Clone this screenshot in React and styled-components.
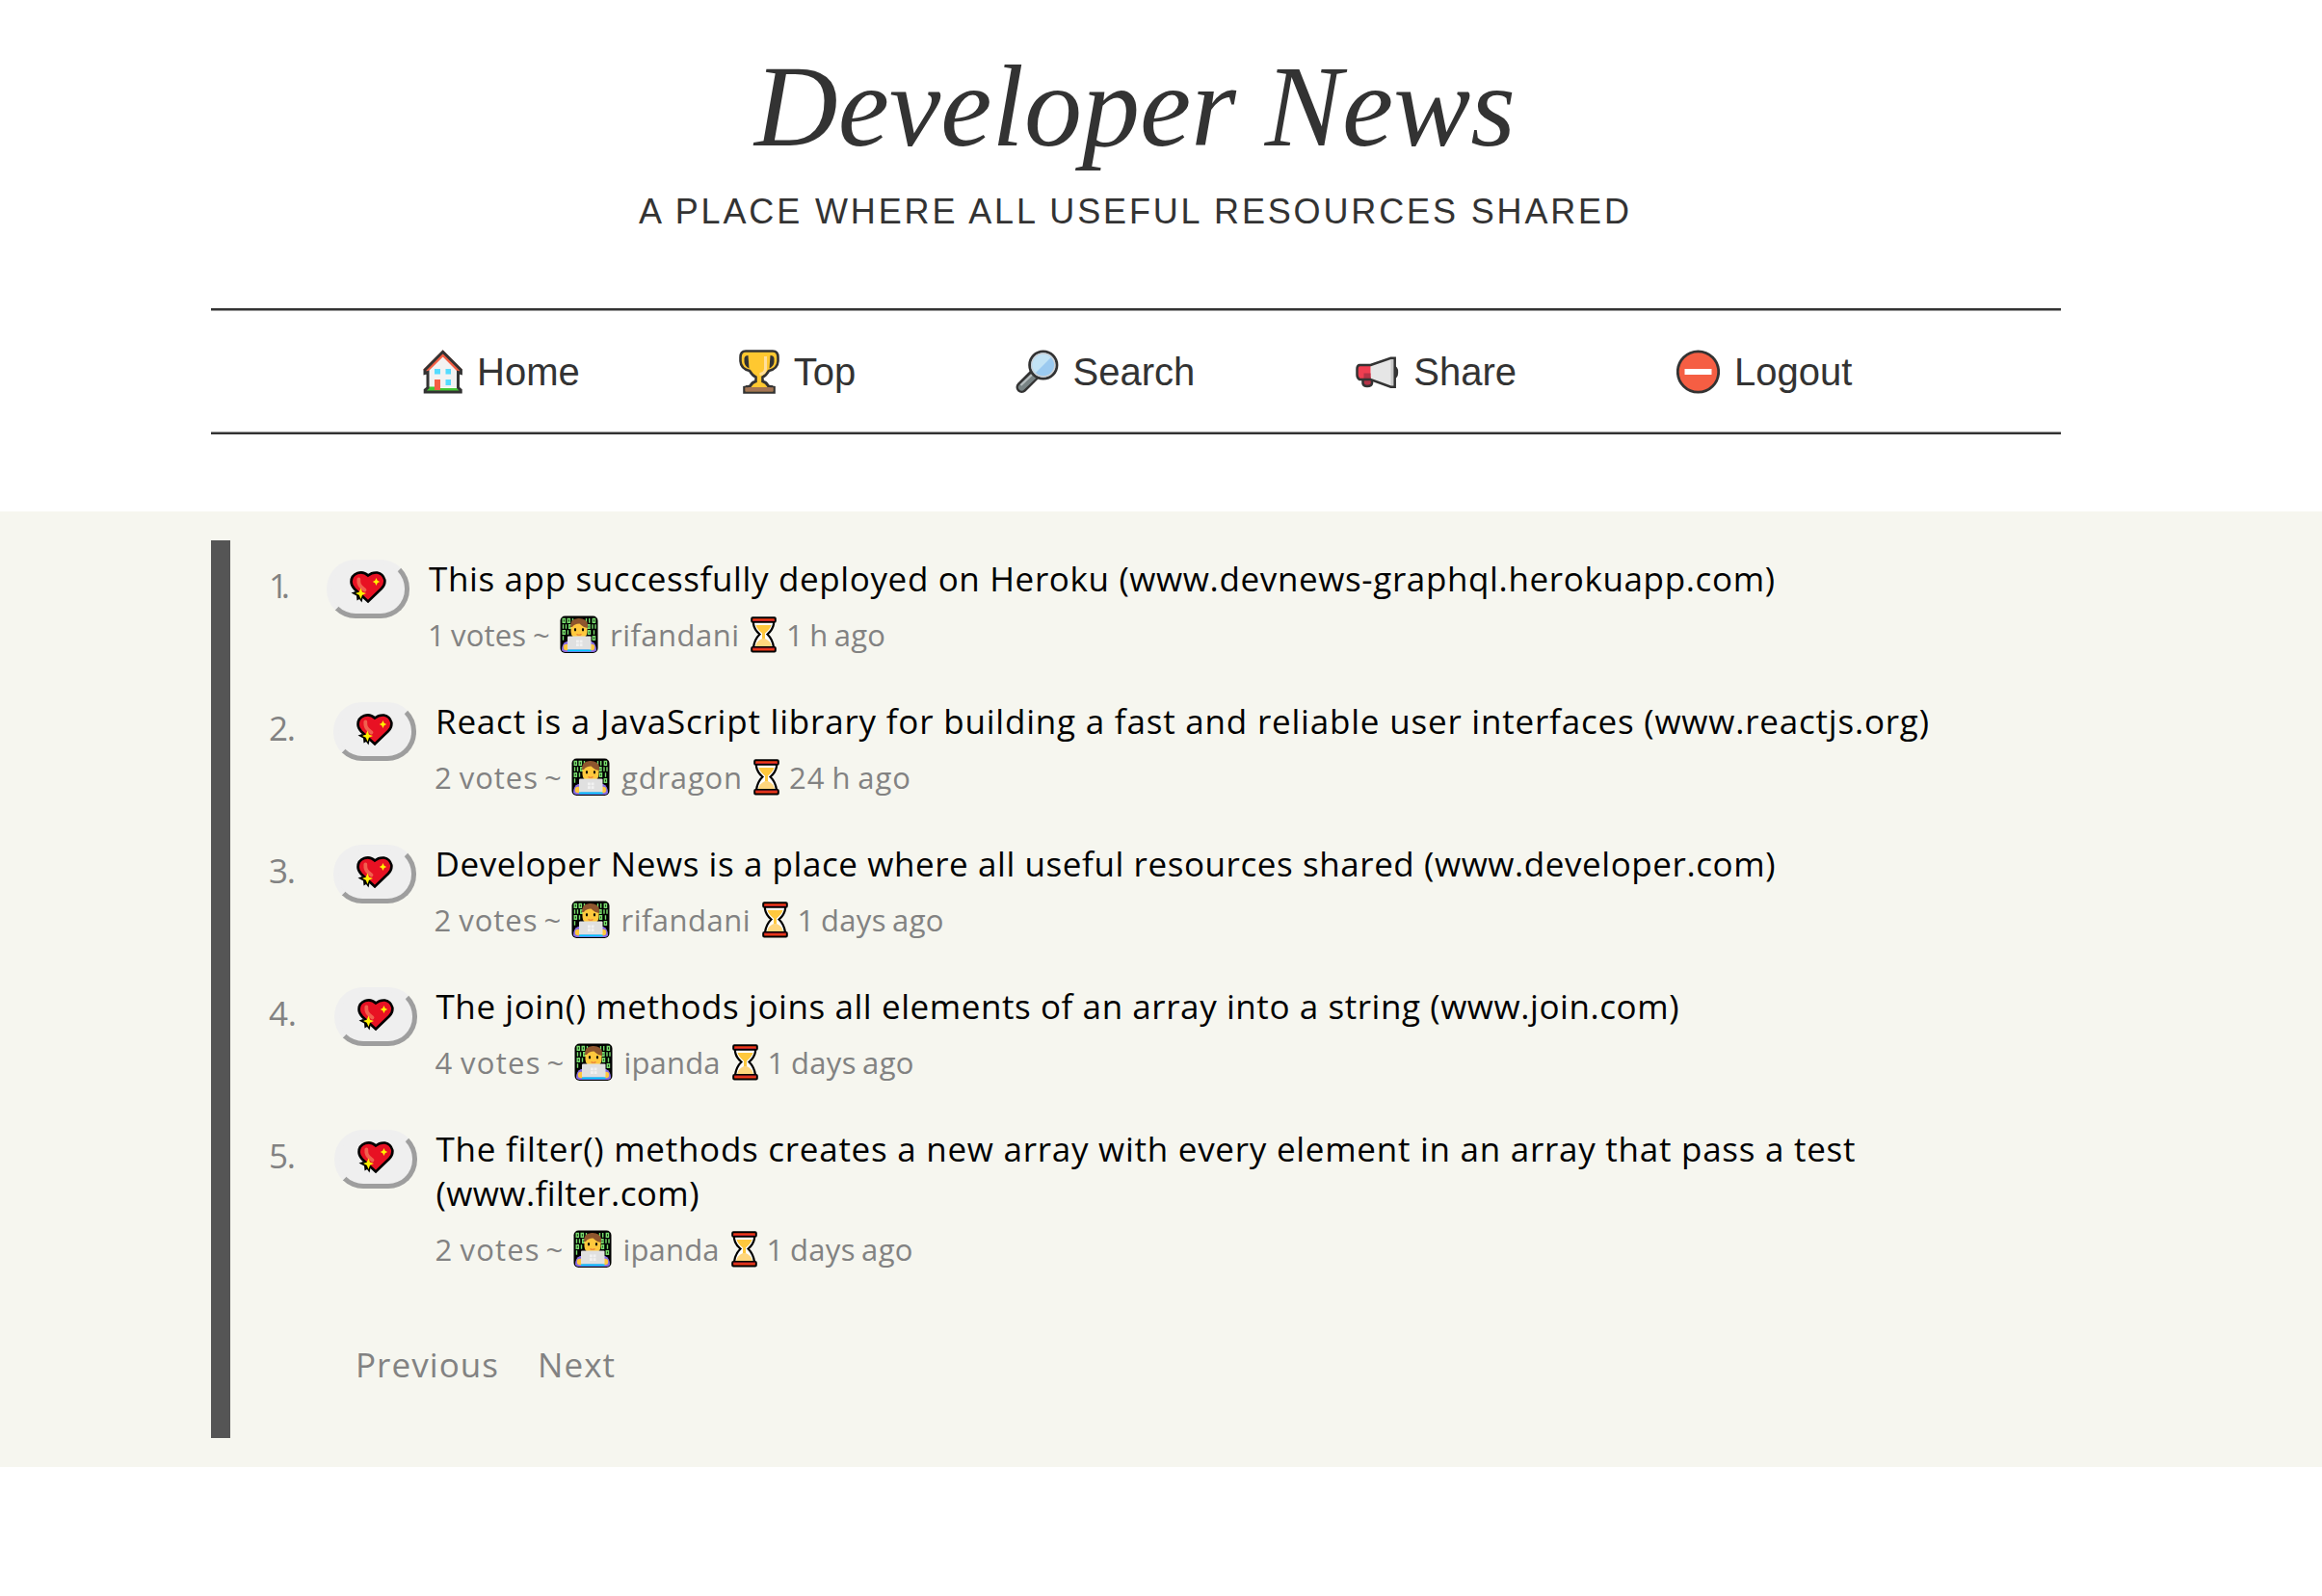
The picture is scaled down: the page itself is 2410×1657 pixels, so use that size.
import React, { useLayoutEffect, useRef } from "react";
import styled, { createGlobalStyle } from "styled-components";

const GlobalStyle = createGlobalStyle`
  body { margin: 0; background: #fff; }
  * { box-sizing: border-box; }
  svg { flex: none; }
`;

const Page = styled.div`
  min-height: 1657px;
  font-family: "Open Sans", "Noto Sans", sans-serif;
`;

const Header = styled.header`
  width: 1920px;
  margin-left: 219px;
  padding-top: 42px;
  color: #333;
  font-family: "Liberation Sans", Arial, sans-serif;
  display: flex;
  flex-direction: column;
`;

const Brand = styled.h1`
  margin: 0;
  padding-right: 2px;
  font: italic 400 120px/138px "Liberation Serif", "Times New Roman", serif;
  text-align: center;
`;

const Tagline = styled.p`
  margin: 19px 0 79px;
  padding-right: 4px;
  font-size: 36px;
  line-height: 42px;
  text-transform: uppercase;
  display: flex;
  justify-content: center;
`;

const Nav = styled.nav`
  height: 131px;
  padding: 0 216px;
  border: solid #333;
  border-width: 2px 0;
  box-shadow: inset 0 1px #999, inset 0 -1px #999;
  display: flex;
  align-items: center;
  justify-content: space-between;
`;

const NavLink = styled.a`
  width: ${(p) => p.$width}px;
  display: flex;
  align-items: center;
  gap: 15px;
  font-size: 40px;
  line-height: 46px;
  white-space: nowrap;
`;

const Main = styled.main`
  margin-top: 80px;
  padding: 30px 0 30px 219px;
  height: 992px;
  background: #f6f6ef;
`;

const Board = styled.section`
  width: 1920px;
  height: 932px;
  padding: 17px 0 0 40px;
  border-left: 20px solid #555;
`;

const List = styled.ol`
  list-style: none;
  margin: 0;
  padding: 0;
  display: flex;
  flex-direction: column;
  gap: 47px;
`;

const Row = styled.li`
  display: flex;
  align-items: flex-start;
`;

const Rank = styled.span`
  width: ${(p) => p.$width}px;
  padding-top: 7px;
  flex: none;
  color: #828282;
  font-size: 35px;
  line-height: 46px;
`;

const VoteButton = styled.button`
  flex: none;
  width: 86px;
  height: 61px;
  margin: 3px 20px 0 0;
  padding: 0 0 4px;
  background: #efefef;
  border: 5px solid;
  border-color: #efefef #9e9e9e #9e9e9e #efefef;
  border-radius: 30px;
  display: flex;
  align-items: center;
  justify-content: center;
`;

const Story = styled.div`
  display: flex;
  flex-direction: column;
`;

const StoryTitle = styled.div`
  display: flex;
  flex-direction: column;
  color: #000;
  font-size: 35px;
  line-height: 46px;
`;

const Meta = styled.div`
  margin-top: 15px;
  margin-left: -1px;
  height: 40px;
  color: #828282;
  font-size: 31px;
  line-height: 40px;
  word-spacing: -2px;
  display: flex;
`;

const Author = styled.span`
  display: flex;
  gap: 12px;
  margin: 0 12px 0 11px;
`;

const Age = styled.span`
  display: flex;
  gap: 10px;
`;

const Tilde = styled.span`
  margin-left: 7px;
  width: 17px;
`;

const Pager = styled.div`
  margin-top: 77px;
  padding-left: 90px;
  display: flex;
  gap: 41px;
  color: #828282;
  font-size: 35px;
  line-height: 46px;
`;

const Measured = styled.span`
  display: block;
  width: ${(p) => p.$width}px;
  white-space: nowrap;
`;

// Tracks the text so that it spans exactly the given measure.
function Fit({ width, children }) {
  const ref = useRef(null);
  useLayoutEffect(() => {
    const el = ref.current;
    el.style.letterSpacing = "0px";
    const natural = el.getBoundingClientRect().width;
    el.style.letterSpacing = `${(width - natural) / (el.textContent.length - 1)}px`;
  }, [width, children]);
  return (
    <Measured $width={width}>
      <span ref={ref}>{children}</span>
    </Measured>
  );
}

const House = () => (
  <svg width="45" height="46" viewBox="0 0 45 46">
    <path d="M8 22L24.700 5.500L41.500 22V39H8Z" fill="#f2f2f2" />
    <path d="M6 22.500L24.700 4L43 22.500" fill="none" stroke="#f55e43" strokeWidth="5" />
    <path d="M16 20h6v5.500h-6zM27.500 20h5.500v5.500h-5.500zM27.500 31h5.500v6h-5.500z" fill="#55dcff" />
    <path d="M6.500 40.500h36v3h-36z" fill="#44c832" />
    <path d="M10 38.500h6v4h-7zM22 40h17l1 3H22z" fill="#44c832" />
    <path d="M16 31h6v11h-6z" fill="#f55e43" />
    <path d="M6 24.500V21L24.600 2.300L43.400 21V24.500L40.500 23.500V39.500L43.200 42V44H6.200V42L9 39.500V23.500Z" fill="none" stroke="#333" strokeWidth="3" />
  </svg>
);

const Trophy = () => (
  <svg width="45" height="46" viewBox="0 0 45 46">
    <path d="M10 1.500H38Q43.500 1.500 43.500 8V12Q43 20 34 22Q31 27 27.500 28.500V33Q31 34 33.500 38L39.500 39V44.500H8.500V39L14.500 38Q17 34 20.500 33V28.500Q17 27 14 22Q5 20 4.500 12V8Q4.500 1.500 10 1.500Z" fill="#ffc830" stroke="#333" strokeWidth="2.600" />
    <path d="M9.500 39h29v4.500h-29z" fill="#a57554" />
    <path d="M12.500 6Q9 6 8.500 9V13Q9 17 13.500 19.500ZM35.500 6Q39 6 39.500 9V13Q39 17 34.500 19.500Z" fill="#333" />
    <path d="M30.500 7V20Q30 25 24.500 25.500" fill="none" stroke="#ffdf9b" strokeWidth="3" />
    <path d="M10 38Q15 39 16 35Q17 33 20 33M38 38Q33 39 32 35Q31 33 28 33" fill="none" stroke="#333" strokeWidth="2" />
  </svg>
);

const Magnifier = () => (
  <svg width="45" height="46" viewBox="0 0 45 46">
    <path d="M6.500 39L19 26.500" stroke="#333" strokeWidth="12" strokeLinecap="round" />
    <path d="M6.500 39L19 27" stroke="#788384" strokeWidth="7" strokeLinecap="round" />
    <path d="M5.500 37L17.500 25.500" stroke="#b4bcbd" strokeWidth="2.200" />
    <circle cx="28.800" cy="16" r="14.200" fill="#9bcaf0" stroke="#333" strokeWidth="2.800" />
    <circle cx="28.800" cy="16" r="12" fill="none" stroke="#d2d2d2" strokeWidth="1.400" />
    <path d="M20.700 24.200A11.400 11.400 0 0 1 36.900 8Z" fill="#c2e3f5" />
  </svg>
);

const Megaphone = () => (
  <svg width="45" height="46" viewBox="0 0 45 46">
    <path d="M38 17Q43.500 18 43 24Q43 29 38 30" fill="#8c8c8c" stroke="#333" strokeWidth="2.300" />
    <path d="M7.500 30V35Q8 38 12 38Q16.500 38 17 35V28" fill="#b53347" stroke="#333" strokeWidth="2.500" />
    <path d="M15.500 16L36.500 8.800H40.500V38.700H36.500L15.500 31Z" fill="#e6e6e6" />
    <path d="M36.500 9h4v29.500h-4z" fill="#c8c8c8" />
    <path d="M4 16H15.500V31H4Q1.500 29.500 1.500 26V20Q1.500 16.500 4 16Z" fill="#f03e51" />
    <path d="M8.500 24.500H15.500V31H8.500Z" fill="#b53347" />
    <path d="M15.500 16L36.500 8.800H40.700V38.700H36.500L15.500 31H4Q1.500 29.500 1.500 26V20Q1.500 16.500 4 16Z" fill="none" stroke="#333" strokeWidth="2.500" />
  </svg>
);

const NoEntry = () => (
  <svg width="45" height="46" viewBox="0 0 45 46">
    <circle cx="22.500" cy="23" r="21.200" fill="#f55e43" stroke="#333" strokeWidth="2.800" />
    <path d="M8.500 20h28v6h-28z" fill="#fff" />
  </svg>
);

const Heart = () => (
  <svg width="38" height="34" viewBox="0 0 38 34">
    <path d="M19 4.500Q14.500 0 8 2Q1.500 4.500 1.500 11Q1.500 15 5 18.500L19 31.500L33 18Q37 14 36.300 9Q34.500 2.500 28.500 1.500Q23 1 19 4.500Z" fill="#e81123" stroke="#000" strokeWidth="2.600" />
    <path d="M9.300 8.500Q9 14 12 16.500L15.500 19.500" fill="none" stroke="#f1604e" strokeWidth="3.800" strokeLinecap="round" />
    <path d="M1.500 22.500L6 21L9 24L14 25.500L12.500 32.500L10 29L7.500 30.500L7 25.500Z" fill="#000" />
    <path d="M11.500 17.500L13 21.700L17 23L13 24.700L11.500 29L9.700 24.700L6 23L9.700 21.700Z" fill="#fff100" />
    <path d="M27.500 7L28.700 9.800L31.200 11L28.700 12.200L27.500 15L26.200 12.200L23.700 11L26.200 9.800Z" fill="#fff100" />
  </svg>
);

const Coder = () => (
  <svg width="40" height="40" viewBox="0 0 40 40">
    <rect x=".5" y=".5" width="39" height="38.500" rx="5" fill="#000" />
    <g stroke="#77dc6c" strokeWidth="1.400" fill="none">
      <path d="M3.200 3.500h2.200v3.800h-2.200zM8.200 3.500h2.200v3.800h-2.200zM13.500 3v4.800M27.500 3v4.800M30.700 3v4.800M34.300 3.500h2.200v3.800h-2.200z" />
      <path d="M3.500 9.200v4.500M6.500 9.200v4.500M9.700 9.700h1.800v3.500h-1.800zM29 9.700h2v3.500h-2zM34 9.200v4.500M37 9.200v4.500" />
      <path d="M3.200 15.700h2.200v3.500h-2.200zM8.500 15.200v4.500M29.500 15.700h2v3.500h-2zM35.500 15.200v4.500" />
      <path d="M3.500 21.300v4.500M34.300 21.800h2.200v3.500h-2.200z" />
    </g>
    <path d="M7 27Q2 29 2 36Q3 38 7 38H33Q37.500 38 38 36Q38 29 33 27Z" fill="#886ce4" />
    <circle cx="7" cy="33" r="3.200" fill="#ffc83d" />
    <circle cx="33" cy="33" r="3.200" fill="#ffc83d" />
    <rect x="11.500" y="4.500" width="17" height="19.500" rx="7" fill="#ffc83d" />
    <path d="M11 12Q10.500 3.500 19 3Q28 2.500 29 9.500V13Q24.500 12.500 20.500 8.500Q15 8.500 13 12Z" fill="#8e562e" />
    <ellipse cx="16" cy="14.800" rx="1.100" ry="1.700" fill="#000" />
    <ellipse cx="24" cy="14.800" rx="1.100" ry="1.700" fill="#000" />
    <path d="M17.500 19.500Q20 21 22.500 19.500" fill="none" stroke="#e8793a" strokeWidth="1.200" />
    <rect x="8" y="21.500" width="24.500" height="14" rx="1" fill="#e0e0e0" />
    <path d="M17 25.500h2.800v2.800H17zM20.700 25.500h2.800v2.800h-2.800zM17 29.200h2.800V32H17zM20.700 29.200h2.800V32h-2.800z" fill="#f2f2f2" />
    <path d="M8 35.500h24.500v1.800H8z" fill="#00c8ff" />
  </svg>
);

const Hourglass = () => (
  <svg width="27" height="40" viewBox="0 0 27 40">
    <path d="M3 6V9Q4 15 9.500 19.500Q4 25 3 33H24Q23 25 17.500 19.500Q23 15 24 9V6Z" fill="#fff" stroke="#000" strokeWidth="2.200" />
    <path d="M5.500 10H21.500Q20.500 14 15 18.500V25H12V18.500Q6.500 14 5.500 10Z" fill="#ffc83d" />
    <path d="M5 32Q6 26.500 12 24H15Q21 26.500 22 32Z" fill="#ffd67d" />
    <rect x="1.200" y="2.200" width="24.600" height="4.600" rx="1" fill="#f03a17" stroke="#000" strokeWidth="2" />
    <rect x="1.200" y="32.900" width="24.600" height="4.600" rx="1" fill="#f03a17" stroke="#000" strokeWidth="2" />
    <path d="M2.200 5h22.600v1H2.200zM2.200 33.500h22.600v1H2.200z" fill="#b9232d" />
  </svg>
);

const links = [
  ["Home", House, 164],
  ["Top", Trophy, 125],
  ["Search", Magnifier, 189],
  ["Share", Megaphone, 168],
  ["Logout", NoEntry, 183],
];

const stories = [
  {
    rankWidth: 60, rank: 22,
    lines: [["This app successfully deployed on Heroku (www.devnews-graphql.herokuapp.com)", 1397]],
    votes: [1, 102], user: ["rifandani", 134], age: ["1 h ago", 103],
  },
  {
    rankWidth: 67, rank: 28,
    lines: [["React is a JavaScript library for building a fast and reliable user interfaces (www.reactjs.org)", 1550]],
    votes: [2, 107], user: ["gdragon", 125], age: ["24 h ago", 126],
  },
  {
    rankWidth: 66.5, rank: 28,
    lines: [["Developer News is a place where all useful resources shared (www.developer.com)", 1391]],
    votes: [2, 107], user: ["rifandani", 134], age: ["1 days ago", 152],
  },
  {
    rankWidth: 67.5, rank: 29,
    lines: [["The join() methods joins all elements of an array into a string (www.join.com)", 1290]],
    votes: [4, 109], user: ["ipanda", 100], age: ["1 days ago", 152],
  },
  {
    rankWidth: 67.5, rank: 28,
    lines: [
      ["The filter() methods creates a new array with every element in an array that pass a test", 1473],
      ["(www.filter.com)", 273],
    ],
    votes: [2, 108], user: ["ipanda", 100], age: ["1 days ago", 152],
  },
];

export default function App() {
  return (
    <Page>
      <GlobalStyle />
      <Header>
        <Brand>Developer News</Brand>
        <Tagline>
          <Fit width={1028}>A place where all useful resources shared</Fit>
        </Tagline>
        <Nav>
          {links.map(([label, Icon, width]) => (
            <NavLink key={label} $width={width}>
              <Icon />
              {label}
            </NavLink>
          ))}
        </Nav>
      </Header>
      <Main>
        <Board>
          <List>
            {stories.map((s, i) => (
              <Row key={i}>
                <Rank $width={s.rankWidth}>
                  <Fit width={s.rank}>{`${i + 1}.`}</Fit>
                </Rank>
                <VoteButton>
                  <Heart />
                </VoteButton>
                <Story>
                  <StoryTitle>
                    {s.lines.map(([text, width]) => (
                      <Fit key={text} width={width}>{text}</Fit>
                    ))}
                  </StoryTitle>
                  <Meta>
                    <Fit width={s.votes[1]}>{`${s.votes[0]} votes`}</Fit>
                    <Tilde>~</Tilde>
                    <Author>
                      <Coder />
                      <Fit width={s.user[1]}>{s.user[0]}</Fit>
                    </Author>
                    <Age>
                      <Hourglass />
                      <Fit width={s.age[1]}>{s.age[0]}</Fit>
                    </Age>
                  </Meta>
                </Story>
              </Row>
            ))}
          </List>
          <Pager>
            <Fit width={148}>Previous</Fit>
            <Fit width={80}>Next</Fit>
          </Pager>
        </Board>
      </Main>
    </Page>
  );
}
